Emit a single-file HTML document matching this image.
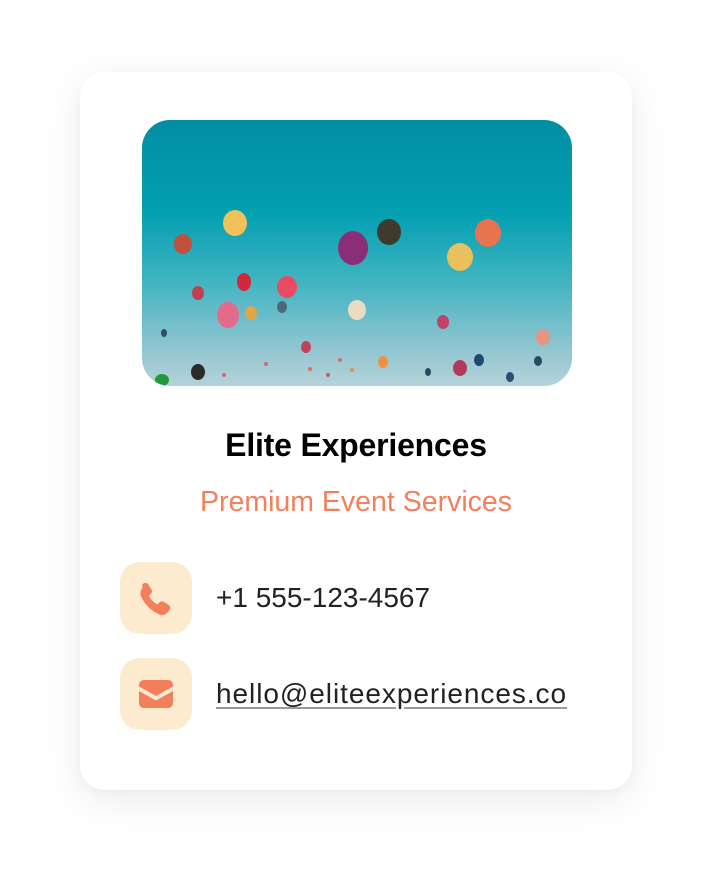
<!DOCTYPE html>
<html><head><style>
*{margin:0;padding:0;box-sizing:border-box}
body{width:712px;height:878px;background:#fff;position:relative;font-family:"Liberation Sans",sans-serif;overflow:hidden}
.card{position:absolute;left:80px;top:72px;width:552px;height:718px;background:#fff;border-radius:24px;box-shadow:0 10px 40px rgba(0,0,0,0.08),0 2px 8px rgba(0,0,0,0.03)}
.img{position:absolute;left:142px;top:120px;width:430px;height:266px;border-radius:28px;overflow:hidden;background:linear-gradient(180deg,#028da2 0%,#03a0b2 35%,#3fb3c0 60%,#9cc9d3 90%,#b4d2d9 100%)}
.t{position:absolute;left:0;width:712px;text-align:center;white-space:nowrap}
.title{top:429px;font-size:32px;line-height:32px;font-weight:bold;color:#000;letter-spacing:-0.2px}
.sub{top:488px;font-size:28.5px;line-height:28px;color:#f47f5b}
.box{position:absolute;left:120px;width:72px;height:72px;border-radius:20px;background:#fdebd0}
.txt{position:absolute;left:216px;font-size:28px;line-height:28px;color:#222;white-space:nowrap}
</style></head><body>
<div class="card"></div>
<div class="img"><svg width="430" height="266" viewBox="0 0 430 266">
<g>
<ellipse cx="93" cy="103" rx="12" ry="13" fill="#f1c15a"/>
<ellipse cx="41" cy="124" rx="9" ry="10" fill="#c0503c"/>
<ellipse cx="211" cy="128" rx="15" ry="17" fill="#8a2e78"/>
<ellipse cx="247" cy="112" rx="12" ry="13" fill="#3e3a2c"/>
<ellipse cx="318" cy="137" rx="13" ry="14" fill="#e9c05c"/>
<ellipse cx="346" cy="113" rx="13" ry="14" fill="#e9734f"/>
<ellipse cx="102" cy="162" rx="7" ry="9" fill="#d2283e"/>
<ellipse cx="145" cy="167" rx="10" ry="11" fill="#ea4a64"/>
<ellipse cx="56" cy="173" rx="6" ry="7" fill="#c04050"/>
<ellipse cx="86" cy="195" rx="11" ry="13" fill="#e46a8c"/>
<ellipse cx="109" cy="193" rx="6" ry="7" fill="#e2a545"/>
<ellipse cx="140" cy="187" rx="5" ry="6" fill="#4a6a7a"/>
<ellipse cx="215" cy="190" rx="9" ry="10" fill="#eadcc0"/>
<ellipse cx="301" cy="202" rx="6" ry="7" fill="#c0426a"/>
<ellipse cx="401" cy="217" rx="7" ry="8" fill="#e79480"/>
<ellipse cx="22" cy="213" rx="3" ry="4" fill="#3a4a6a"/>
<ellipse cx="164" cy="227" rx="5" ry="6" fill="#c2405a"/>
<ellipse cx="241" cy="242" rx="5" ry="6" fill="#f09040"/>
<ellipse cx="318" cy="248" rx="7" ry="8" fill="#b03a5a"/>
<ellipse cx="337" cy="240" rx="5" ry="6" fill="#1e4a72"/>
<ellipse cx="396" cy="241" rx="4" ry="5" fill="#2a4a62"/>
<ellipse cx="286" cy="252" rx="3" ry="4" fill="#2a4a62"/>
<ellipse cx="368" cy="257" rx="4" ry="5" fill="#2a5070"/>
<ellipse cx="56" cy="252" rx="7" ry="8" fill="#2a2a2a"/>
<ellipse cx="20" cy="260" rx="7" ry="6" fill="#1f9a3a"/>
<circle cx="82" cy="255" r="2" fill="#e06070"/><circle cx="124" cy="244" r="2" fill="#e06070"/>
<circle cx="168" cy="249" r="2" fill="#e07050"/><circle cx="198" cy="240" r="2" fill="#d07060"/>
<circle cx="210" cy="250" r="2" fill="#e09050"/><circle cx="186" cy="255" r="2" fill="#c06070"/>
</g></svg></div>
<div class="t title">Elite Experiences</div>
<div class="t sub">Premium Event Services</div>
<div class="box" style="top:562px"><svg width="72" height="72" viewBox="0 0 72 72"><g transform="translate(36 36) scale(1.3) translate(-36 -36)"><path d="M25.5 25.5c1.5-1.5 3.5-1.5 4.5 0l2.5 4c.8 1.3.4 2.7-.6 3.5l-1.4 1.1c1.3 3 3.7 5.5 6.8 6.9l1.1-1.4c.8-1 2.2-1.4 3.5-.6l4 2.5c1.5 1 1.5 3 0 4.5l-1.5 1.5c-1.6 1.6-4 2-6 1.1-6.2-2.7-11.2-7.7-14-14-.9-2-.5-4.4 1.1-6z" fill="#f47f5b"/></g></svg></div>
<div class="box" style="top:658px"><svg width="72" height="72" viewBox="0 0 72 72"><path d="M19 27c0-2.8 2.2-5 5-5h24c2.8 0 5 2.2 5 5v1.5L36 38 19 28.5z" fill="#f47f5b"/><path d="M19 33l17 9.5 17-9.5v12c0 2.8-2.2 5-5 5H24c-2.8 0-5-2.2-5-5z" fill="#f47f5b"/></svg></div>
<div class="txt" style="top:584px">+1 555-123-4567</div>
<div class="txt" style="top:680px;text-decoration:underline;text-decoration-color:#999;text-underline-offset:4px;letter-spacing:0.95px">hello@eliteexperiences.co</div>
</body></html>
